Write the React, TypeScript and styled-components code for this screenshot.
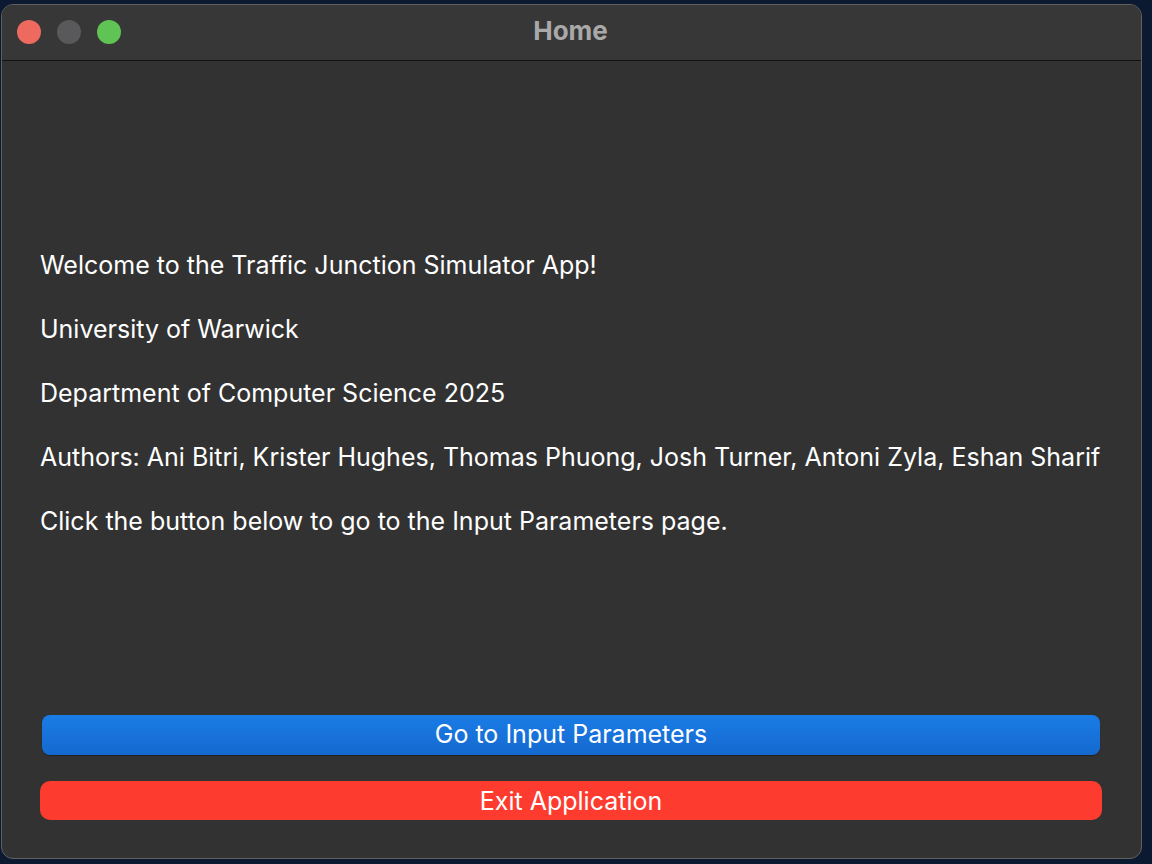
import React from 'react';
import styled, { createGlobalStyle } from 'styled-components';

const GlobalStyle = createGlobalStyle`
  html, body {
    margin: 0;
    padding: 0;
    background: #0b1a31;
    width: 1152px;
    height: 864px;
    overflow: hidden;
  }
  * {
    box-sizing: border-box;
  }
`;

const Desktop = styled.div`
  width: 1152px;
  height: 864px;
  padding: 4px 0 0 1px;
`;

const Window = styled.div`
  width: 1141px;
  height: 855px;
  border-radius: 12px;
  border: 1px solid #606060;
  background: #323232;
  overflow: hidden;
  display: flex;
  flex-direction: column;
  font-family: Inter, 'Liberation Sans', Arial, sans-serif;
`;

const TitleBar = styled.div`
  position: relative;
  height: 56px;
  flex: none;
  background: #373738;
  border-bottom: 1px solid #111;
  display: flex;
  align-items: center;
  justify-content: center;
`;

const Lights = styled.div`
  position: absolute;
  left: 15px;
  top: 15px;
  display: flex;
  gap: 16px;
`;

const Light = styled.span<{ $color: string }>`
  width: 24px;
  height: 24px;
  border-radius: 50%;
  background: ${(p) => p.$color};
`;

const Title = styled.div`
  color: #a9a9aa;
  font-weight: bold;
  font-size: 26px;
  margin: -4px 2px 0 0;
`;

const Content = styled.div`
  flex: 1;
  display: flex;
  flex-direction: column;
  padding: 172px 39px 38px 38px;
`;

const Line = styled.p`
  margin: 0;
  color: #ffffff;
  font-size: 25px;
  line-height: 64px;
  white-space: nowrap;
`;

const Buttons = styled.div`
  margin-top: auto;
  display: flex;
  flex-direction: column;
  gap: 26px;
`;

const Button = styled.button<{ $variant: 'primary' | 'danger' }>`
  height: ${(p) => (p.$variant === 'primary' ? '40px' : '39px')};
  margin: ${(p) => (p.$variant === 'primary' ? '0 2px' : '0')};
  border: none;
  border-radius: ${(p) => (p.$variant === 'primary' ? '8px' : '10px')};
  background: ${(p) =>
    p.$variant === 'primary'
      ? 'linear-gradient(#1a7ce6, #1569cf)'
      : '#fe3b2f'};
  box-shadow: ${(p) =>
    p.$variant === 'primary' ? '0 1px 1px rgba(0,0,0,0.35)' : 'none'};
  color: #fff;
  font-family: inherit;
  font-size: 25px;
  padding: ${(p) => (p.$variant === 'primary' ? '0 0 3px' : '0')};
  cursor: pointer;
`;

const lines = [
  'Welcome to the Traffic Junction Simulator App!',
  'University of Warwick',
  'Department of Computer Science 2025',
  'Authors: Ani Bitri, Krister Hughes, Thomas Phuong, Josh Turner, Antoni Zyla, Eshan Sharif',
  'Click the button below to go to the Input Parameters page.',
];

export default function App() {
  return (
    <>
      <GlobalStyle />
      <Desktop>
        <Window>
          <TitleBar>
            <Lights>
              <Light $color="#ee6a5f" />
              <Light $color="#59595b" />
              <Light $color="#5fc454" />
            </Lights>
            <Title>Home</Title>
          </TitleBar>
          <Content>
            {lines.map((l) => (
              <Line key={l}>{l}</Line>
            ))}
            <Buttons>
              <Button $variant="primary">Go to Input Parameters</Button>
              <Button $variant="danger">Exit Application</Button>
            </Buttons>
          </Content>
        </Window>
      </Desktop>
    </>
  );
}
